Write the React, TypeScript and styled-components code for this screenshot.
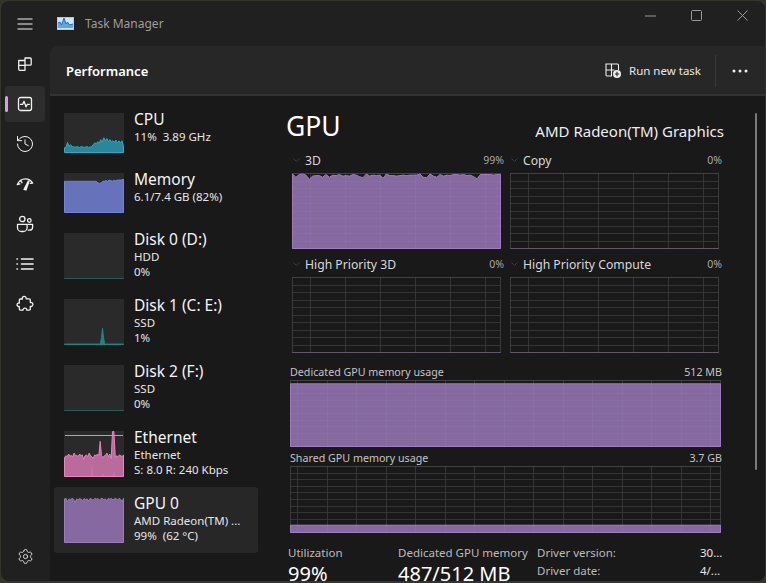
import React from "react";
import styled, { createGlobalStyle } from "styled-components";
import { History, Settings } from "lucide-react";

const GlobalStyle = createGlobalStyle`
html, body {
    margin: 0;
    padding: 0;
    background: #33352c;
}
* {
    box-sizing: border-box;
}
`;

const Screen = styled.div`
width: 766px;
height: 583px;
padding: 1px 1px 2px 1px;
overflow: hidden;
`;

const Window = styled.div`
width: 100%;
height: 100%;
display: flex;
background: #202020;
border-radius: 8px;
overflow: hidden;
font-family: "Noto Sans", "Open Sans", sans-serif;
color: #fff;
`;

const Rail = styled.nav`
width: 49px;
flex-shrink: 0;
display: flex;
flex-direction: column;
align-items: flex-start;
padding: 5px 0 3px 4px;
`;

const RailButton = styled.div<{ $active?: boolean }>`
position: relative;
width: 40px;
height: 36px;
margin-bottom: 4px;
display: flex;
align-items: center;
justify-content: center;
border-radius: 4px;
color: #f2f2f2;
background: ${(p) => (p.$active ? "#2d2d2d" : "transparent")};
`;

const RailAccent = styled.span`
position: absolute;
left: 0;
top: 10px;
width: 3px;
height: 16px;
border-radius: 2px;
background: #d79fe0;
`;

const RailSpacer = styled.div`
flex: 1;
`;

const Right = styled.div`
flex: 1;
min-width: 0;
display: flex;
flex-direction: column;
`;

const TitleBar = styled.header`
height: 45px;
flex-shrink: 0;
display: flex;
align-items: center;
padding-left: 7px;
`;

const AppName = styled.span`
margin-left: 11px;
font-size: 12px;
color: #9d9d9d;
`;

const WindowControls = styled.div`
margin-left: auto;
display: flex;
`;

const ControlButton = styled.div`
width: 46px;
height: 30px;
margin-top: -16px;
display: flex;
align-items: center;
justify-content: center;
color: #9a9a9a;
`;

const Panel = styled.div`
flex: 1;
min-height: 0;
display: flex;
flex-direction: column;
background: #191919;
border-top-left-radius: 8px;
overflow: hidden;
`;

const PanelHeader = styled.div`
height: 50px;
flex-shrink: 0;
display: flex;
align-items: center;
padding: 1px 17px 0 16px;
background: #272727;
border-bottom: 2px solid #333;
`;

const PanelTitle = styled.h1`
margin: 0;
font-size: 13px;
font-weight: 600;
`;

const RunTask = styled.div`
margin-left: auto;
display: flex;
align-items: center;
gap: 7px;
font-size: 11.5px;
color: #e8e8e8;
`;

const Divider = styled.div`
width: 1px;
height: 32px;
margin: 0 16px 0 14px;
background: #3a3a3a;
`;

const Body = styled.div`
flex: 1;
min-height: 0;
display: flex;
position: relative;
`;

const List = styled.div`
width: 220px;
flex-shrink: 0;
padding: 7px 0 0 4px;
`;

const ListItem = styled.div<{ $selected?: boolean; $tall?: boolean }>`
width: 204px;
height: ${(p) => (p.$tall ? 66 : 60)}px;
padding: 10px;
display: flex;
gap: 10px;
border-radius: 3px;
background: ${(p) => (p.$selected ? "#272727" : "transparent")};
`;

const Thumb = styled.div<{ $tall?: boolean }>`
width: 60px;
height: ${(p) => (p.$tall ? 46 : 40)}px;
flex-shrink: 0;
background: #2a2a2a;
`;

const ItemText = styled.div`
margin-top: -4px;
min-width: 0;
white-space: nowrap;
`;

const ItemName = styled.div`
font-size: 15.5px;
line-height: 20px;
color: #f4f4f4;
`;

const ItemSub = styled.div`
font-size: 11.5px;
line-height: 15px;
color: #e6e6e6;
white-space: pre;
`;

const Detail = styled.div`
flex: 1;
min-width: 0;
padding: 9px 0 0 20px;
overflow: hidden;
`;

const TitleRow = styled.div`
width: 434px;
height: 44px;
display: flex;
align-items: center;
justify-content: space-between;
`;

const GpuTitle = styled.h2`
margin: -2px 0 0 -4px;
font-size: 26.5px;
font-weight: 400;
`;

const GpuName = styled.div`
font-size: 15px;
margin-top: 8px;
color: #eee;
`;

const GraphGrid = styled.div`
width: 430px;
margin-left: 2px;
display: grid;
grid-template-columns: 212px 212px;
column-gap: 6px;
row-gap: 4px;
`;

const GraphCell = styled.div``;

const GraphHead = styled.div`
height: 24px;
padding-bottom: 2px;
display: flex;
align-items: center;
`;

const Chevron = styled.svg`
width: 7px;
height: 4px;
margin: 0 5px 0 1px;
color: #3c3c3c;
`;

const GraphLabel = styled.span`
font-size: 12.2px;
color: #d8d8d8;
`;

const GraphValue = styled.span`
margin-left: auto;
font-size: 10.5px;
color: #a8a8a8;
`;

const WideBlock = styled.div<{ $top: number }>`
width: 432px;
margin-top: ${(p) => p.$top}px;
`;

const WideHead = styled.div`
height: 17px;
display: flex;
justify-content: space-between;
align-items: center;
font-size: 10.7px;
color: #c4c4c4;
`;

const Stats = styled.div`
width: 434px;
margin: 12px 0 0 -2px;
display: flex;
`;

const Stat = styled.div<{ $w: number }>`
width: ${(p) => p.$w}px;
flex-shrink: 0;
`;

const StatLabel = styled.div`
font-size: 11.5px;
line-height: 16px;
color: #bcbcbc;
white-space: nowrap;
`;

const StatValue = styled.div`
font-size: 20px;
line-height: 26px;
white-space: nowrap;
`;

const DriverRows = styled.div`
flex: 1;
display: flex;
flex-direction: column;
gap: 2px;
`;

const DriverRow = styled.div`
display: flex;
justify-content: space-between;
font-size: 11.5px;
line-height: 16px;
color: #bcbcbc;
`;

const DriverValue = styled.span`
color: #e6e6e6;
width: 22px;
`;

const ScrollThumb = styled.div`
position: absolute;
right: 8px;
top: 17px;
width: 2px;
height: 357px;
border-radius: 1px;
background: #7a7a7a;
`;

type GraphProps = {
    w: number;
    h: number;
    values: number[];
    color: string;
    fill: string;
    rows?: number;
    offX?: number;
    stepX?: number;
    extra?: number[];
    cap?: number;
};

const Graph = ({ w, h, values, color, fill, rows = 0, offX = 0, stepX = 0, extra, cap }: GraphProps) => {
    const toPath = (vals: number[]) => {
        const pts = vals.map((v, i) => `${(0.5 + (i / (vals.length - 1)) * (w - 1)).toFixed(1)},${(h - 0.5 - v * (h - 1)).toFixed(1)}`);
        return `M0.5,${h - 0.5}L${pts.join("L")}L${w - 0.5},${h - 0.5}Z`;
    };
    const vertical: number[] = [];
    if (stepX) {
        for (let x = offX; x < w; x += stepX) vertical.push(x);
    }
    const horizontal: number[] = [];
    for (let i = 0; i <= rows; i++) horizontal.push(Math.round((i * (h - 1)) / rows) + 0.5);
    const gridLines = (color: string) => (
        <>
            {horizontal.map((y) => <line key={`h${y}`} x1={0} x2={w} y1={y} y2={y} stroke={color} />)}
            {vertical.map((x) => <line key={`v${x}`} x1={Math.round(x) + 0.5} x2={Math.round(x) + 0.5} y1={0} y2={h} stroke={color} />)}
        </>
    );
    return (
        <svg width={w} height={h} viewBox={`0 0 ${w} ${h}`} style={{ display: "block" }}>
            {rows > 0 && gridLines("#2c2c2c")}
            {rows > 0 && <rect x={0.5} y={0.5} width={w - 1} height={h - 1} fill="none" stroke="#3a3a3a" />}
            <path d={toPath(values)} fill={fill} stroke={color} strokeWidth={1} />
            {rows > 0 && gridLines("rgba(255,255,255,0.04)")}
            {extra && <path d={toPath(extra)} fill={color} fillOpacity={0.35} stroke="none" />}
            {cap !== undefined && <line x1={1} x2={w - 1} y1={cap} y2={cap} stroke={color} />}
        </svg>
    );
};

const PURPLE = "#9a7cbd";
const PURPLE_FILL = "rgb(133,105,160)";
const FLAT = [0, 0];

const cpuData = [0.12, 0.13, 0.26, 0.16, 0.2, 0.14, 0.15, 0.13, 0.15, 0.14, 0.13, 0.15, 0.14, 0.13, 0.14, 0.15, 0.13, 0.14, 0.15, 0.2, 0.25, 0.22, 0.28, 0.24, 0.33, 0.26, 0.38, 0.3, 0.36, 0.28, 0.33, 0.27, 0.3, 0.26, 0.32, 0.24, 0.3, 0.25, 0.3, 0.15];
const memData = [0.8, 0.8, 0.8, 0.8, 0.8, 0.8, 0.8, 0.8, 0.8, 0.8, 0.8, 0.8, 0.8, 0.8, 0.8, 0.8, 0.8, 0.8, 0.8, 0.8, 0.8, 0.76, 0.75, 0.76, 0.8, 0.8, 0.82, 0.8, 0.83, 0.82, 0.8, 0.83, 0.81, 0.83, 0.83, 0.83, 0.84, 0.85];
const disk1Data = Array.from({ length: 60 }, (_, i) => (i === 38 ? 0.36 : i === 37 || i === 39 ? 0.16 : i === 36 || i === 40 ? 0.03 : 0.01));
const ethData = [0.42, 0.46, 0.44, 0.5, 0.45, 0.47, 0.44, 0.52, 0.46, 0.47, 0.44, 0.5, 0.46, 0.48, 0.38, 0.46, 0.48, 0.44, 0.52, 0.46, 0.44, 0.4, 0.48, 0.46, 0.5, 0.46, 0.78, 0.46, 0.42, 0.46, 0.48, 0.52, 0.44, 0.5, 0.4, 1, 1, 0.42, 0.46, 0.44, 0.48, 0.46, 0.44, 0.48];
const ethLow = [0, 0, 0, 0, 0, 0, 0, 0, 0, 0, 0, 0, 0, 0, 0, 0, 0, 0, 0, 0.02, 0.3, 0.02, 0, 0, 0, 0, 0, 0.02, 0.08, 0.02, 0, 0, 0, 0, 0, 0.02, 0.1, 0.02, 0, 0, 0, 0, 0, 0];
const gpuThumb = [0.97, 0.98, 0.9, 0.97, 0.95, 0.98, 0.96, 0.88, 0.97, 0.94, 0.98, 0.96, 0.93, 0.98, 0.95, 0.97, 0.92, 0.98, 0.96, 0.94, 0.98, 0.96, 0.98, 0.94, 0.97, 0.98, 0.95, 0.97, 0.93, 0.98, 0.96, 0.98, 0.95, 0.97, 0.98, 0.94, 0.98, 0.96, 0.9, 0.98];
const gpu3d = [0.99, 0.93, 0.98, 0.99, 0.97, 0.89, 0.95, 0.96, 0.96, 0.93, 0.98, 0.93, 0.97, 0.96, 0.98, 0.95, 0.96, 0.95, 0.98, 0.97, 0.94, 0.92, 0.99, 0.95, 0.97, 0.96, 0.97, 0.91, 0.99, 0.96, 0.96, 0.95, 0.96, 0.97, 0.96, 0.97, 0.97, 0.97, 0.99, 0.93, 0.92, 0.99, 0.95, 0.93, 0.98, 0.95, 0.97, 0.96, 0.98, 0.98, 0.97, 0.98, 0.96, 0.97, 0.94, 0.9, 0.98, 0.98, 0.98, 0.98, 0.97, 0.98, 0.98].map((v) => 1 - (1 - v) * 0.7);

const GRID_COLOR = "#5b5068";
const GRID_CLEAR = "rgba(0,0,0,0)";

const stroke = {
    fill: "none",
    stroke: "currentColor",
    strokeWidth: 1.3,
    strokeLinecap: "round" as const,
    strokeLinejoin: "round" as const,
};

const ProcessesIcon = () => (
    <svg width="16" height="16" viewBox="0 0 16 16" {...stroke}>
        <path d="M1.7 4.5h6.3v9.8H3a1.3 1.3 0 0 1-1.3-1.3V4.5zM1.7 9.4h6.3M8 2h5.2a1 1 0 0 1 1 1v5.2a1 1 0 0 1-1 1H8V2z" />
    </svg>
);

const PerformanceIcon = () => (
    <svg width="16" height="16" viewBox="0 0 16 16" {...stroke}>
        <rect x="1.5" y="1.5" width="13" height="13" rx="2" />
        <path d="M3.5 8.3h2.2l1.3-3 2 5.6 1.3-2.6h2.2" />
    </svg>
);

const StartupIcon = () => (
    <svg width="18" height="14" viewBox="0 0 18 14" {...stroke}>
        <path d="M1.3 7.5C3 3.6 6.200 1.800 9.500 1.800c2.800 0 5.300 1.300 7.200 4.200M1.300 7.500l2.700-.6M4.800 3.600l1.200 2.200M16.700 6l-2.400.3" />
        <path d="M7.200 12.800l4.800-9.600 1.800.9-3.400 9.700z" fill="currentColor" stroke="none" />
    </svg>
);

const UsersIcon = () => (
    <svg width="18" height="18" viewBox="0 0 18 18" {...stroke}>
        <circle cx="6.3" cy="4" r="2.7" />
        <circle cx="13.3" cy="5.5" r="1.8" />
        <path d="M1.5 9.3h9.6v3.4a3.9 3.9 0 0 1-3.900 3.800H5.400a3.900 3.900 0 0 1-3.900-3.800V9.300z" />
        <path d="M12 9.300h4.600v2.900c0 1.900-1.600 3-3.200 3h-1.100" />
    </svg>
);

const DetailsIcon = () => (
    <svg width="18" height="14" viewBox="0 0 18 14" {...stroke}>
        <path d="M5.500 2h11.500M5.500 7h11.500M5.500 12h11.500M1 2h.4M1 7h.4M1 12h.4" strokeWidth="1.6" />
    </svg>
);

const ServicesIcon = () => (
    <svg width="18" height="18" viewBox="0 0 18 18" {...stroke}>
        <path d="M7.200 1.600c1.600-.8 3.200.4 3 2.200h3.100a1 1 0 0 1 1 1v2.700c1.900-.4 3 1.200 2.400 2.800-.5 1.100-1.500 1.400-2.400 1.100v2.700a1 1 0 0 1-1 1h-2.600c.2-2-2.900-2.800-3.600-.7-.2.3-.2.500-.1.700H4.300a1 1 0 0 1-1-1v-2.600C1 12 .2 8.900 2.300 8.200c.3-.1.700-.1 1 0V5a1 1 0 0 1 1-1h2.100c-.3-1 0-1.900.8-2.400z" />
    </svg>
);

const MenuIcon = () => (
    <svg width="16" height="12" viewBox="0 0 16 12" fill="none" stroke="currentColor" strokeWidth="1.1">
        <path d="M0.500 1h15M0.500 6h15M0.500 11h15" />
    </svg>
);

const AppIcon = () => (
    <svg width="17" height="13" viewBox="0 0 17 13">
        <rect x="0.5" y="0.5" width="16" height="12" fill="#cfe6f8" stroke="#a8cdea" />
        <path d="M1 11V6l2-1 1.500 3 2.500-7 2 6 1.500-2 2 3 3.500-1v4z" fill="#5aa8ea" />
        <path d="M1 6l2-1 1.500 3 2.500-7 2 6 1.500-2 2 3 3.500-1" fill="none" stroke="#2a6cb4" strokeWidth="1" />
    </svg>
);

const RunIcon = () => (
    <svg width="17" height="16" viewBox="0 0 17 16">
        <path d="M1 1h5.500v12H2a1 1 0 0 1-1-1V1zM1 7h5.500M6.500 1h6a1 1 0 0 1 1 1v5M6.500 7h3" fill="none" stroke="#eee" strokeWidth="1.1" />
        <circle cx="12" cy="11" r="4" fill="#eee" />
        <path d="M12 8.800v4.400M9.800 11h4.400" stroke="#222" strokeWidth="1.1" />
    </svg>
);

const DotsIcon = () => (
    <svg width="16" height="4" viewBox="0 0 16 4" fill="#eee">
        <circle cx="2" cy="2" r="1.500" />
        <circle cx="8" cy="2" r="1.500" />
        <circle cx="14" cy="2" r="1.500" />
    </svg>
);

const ChevronDown = () => (
    <Chevron viewBox="0 0 7 4" fill="none" stroke="currentColor">
        <path d="M0.500 0.500l3 3 3-3" />
    </Chevron>
);

const items = [
    { name: "CPU", sub: ["11%  3.89 GHz"], graph: <Graph w={60} h={40} values={cpuData} color="#2aaac4" fill="rgba(42,150,172,0.85)" /> },
    { name: "Memory", sub: ["6.1/7.4 GB (82%)"], graph: <Graph w={60} h={40} values={memData} color="#7083e0" fill="#6673bb" /> },
    { name: "Disk 0 (D:)", sub: ["HDD", "0%"], tall: true, graph: <Graph w={60} h={46} values={FLAT} color="#2b5c58" fill="#2b5c58" /> },
    { name: "Disk 1 (C: E:)", sub: ["SSD", "1%"], tall: true, graph: <Graph w={60} h={46} values={disk1Data} color="#1f8583" fill="#1f8583" /> },
    { name: "Disk 2 (F:)", sub: ["SSD", "0%"], tall: true, graph: <Graph w={60} h={46} values={FLAT} color="#2b5c58" fill="#2b5c58" /> },
    { name: "Ethernet", sub: ["Ethernet", "S: 8.0 R: 240 Kbps"], tall: true, graph: <Graph w={60} h={46} values={ethData} extra={ethLow} color="#ea82c0" fill="#b96b9c" cap={4.5} /> },
    { name: "GPU 0", sub: ["AMD Radeon(TM) ...", "99%  (62 °C)"], tall: true, selected: true, graph: <Graph w={60} h={46} values={gpuThumb} color={PURPLE} fill="#8569a0" /> },
];

const App = () => {
    return (
        <Screen>
            <GlobalStyle />
            <Window>
                <Rail>
                    <RailButton><MenuIcon /></RailButton>
                    <RailButton><ProcessesIcon /></RailButton>
                    <RailButton $active><RailAccent /><PerformanceIcon /></RailButton>
                    <RailButton><History size={20} strokeWidth={1.2} /></RailButton>
                    <RailButton><StartupIcon /></RailButton>
                    <RailButton><UsersIcon /></RailButton>
                    <RailButton><DetailsIcon /></RailButton>
                    <RailButton><ServicesIcon /></RailButton>
                    <RailSpacer />
                    <RailButton><Settings size={17} strokeWidth={1.2} /></RailButton>
                </Rail>
                <Right>
                    <TitleBar>
                        <AppIcon />
                        <AppName>Task Manager</AppName>
                        <WindowControls>
                            <ControlButton>
                                <svg width="11" height="2" viewBox="0 0 11 2" stroke="currentColor"><path d="M0 1h11" /></svg>
                            </ControlButton>
                            <ControlButton>
                                <svg width="11" height="11" viewBox="0 0 11 11" fill="none" stroke="currentColor"><rect x="0.500" y="0.500" width="10" height="10" rx="1" /></svg>
                            </ControlButton>
                            <ControlButton>
                                <svg width="11" height="11" viewBox="0 0 11 11" stroke="currentColor"><path d="M0.500 0.500l10 10M10.500 0.500l-10 10" /></svg>
                            </ControlButton>
                        </WindowControls>
                    </TitleBar>
                    <Panel>
                        <PanelHeader>
                            <PanelTitle>Performance</PanelTitle>
                            <RunTask><RunIcon />Run new task</RunTask>
                            <Divider />
                            <DotsIcon />
                        </PanelHeader>
                        <Body>
                            <List>
                                {items.map((it) => (
                                    <ListItem key={it.name} $tall={it.tall} $selected={it.selected}>
                                        <Thumb $tall={it.tall}>{it.graph}</Thumb>
                                        <ItemText>
                                            <ItemName>{it.name}</ItemName>
                                            {it.sub.map((s) => <ItemSub key={s}>{s}</ItemSub>)}
                                        </ItemText>
                                    </ListItem>
                                ))}
                            </List>
                            <Detail>
                                <TitleRow>
                                    <GpuTitle>GPU</GpuTitle>
                                    <GpuName>AMD Radeon(TM) Graphics</GpuName>
                                </TitleRow>
                                <GraphGrid>
                                    <GraphCell>
                                        <GraphHead><ChevronDown /><GraphLabel>3D</GraphLabel><GraphValue>99%</GraphValue></GraphHead>
                                        <Graph w={209} h={76} rows={10} offX={18} stepX={35} values={gpu3d} color={PURPLE} fill={PURPLE_FILL} />
                                    </GraphCell>
                                    <GraphCell>
                                        <GraphHead><ChevronDown /><GraphLabel>Copy</GraphLabel><GraphValue>0%</GraphValue></GraphHead>
                                        <Graph w={209} h={76} rows={10} offX={18} stepX={35} values={FLAT} color={GRID_COLOR} fill={GRID_CLEAR} />
                                    </GraphCell>
                                    <GraphCell>
                                        <GraphHead><ChevronDown /><GraphLabel>High Priority 3D</GraphLabel><GraphValue>0%</GraphValue></GraphHead>
                                        <Graph w={209} h={76} rows={10} offX={18} stepX={35} values={FLAT} color={GRID_COLOR} fill={GRID_CLEAR} />
                                    </GraphCell>
                                    <GraphCell>
                                        <GraphHead><ChevronDown /><GraphLabel>High Priority Compute</GraphLabel><GraphValue>0%</GraphValue></GraphHead>
                                        <Graph w={209} h={76} rows={10} offX={18} stepX={35} values={FLAT} color={GRID_COLOR} fill={GRID_CLEAR} />
                                    </GraphCell>
                                </GraphGrid>
                                <WideBlock $top={10}>
                                    <WideHead><span>Dedicated GPU memory usage</span><span>512 MB</span></WideHead>
                                    <Graph w={431} h={67} rows={10} offX={7} stepX={29.5} values={[0.95, 0.95]} color={PURPLE} fill={PURPLE_FILL} />
                                </WideBlock>
                                <WideBlock $top={2}>
                                    <WideHead><span>Shared GPU memory usage</span><span>3.7 GB</span></WideHead>
                                    <Graph w={431} h={67} rows={10} offX={7} stepX={29.5} values={[0.11, 0.11]} color={PURPLE} fill={PURPLE_FILL} />
                                </WideBlock>
                                <Stats>
                                    <Stat $w={110}>
                                        <StatLabel>Utilization</StatLabel>
                                        <StatValue>99%</StatValue>
                                    </Stat>
                                    <Stat $w={139}>
                                        <StatLabel>Dedicated GPU memory</StatLabel>
                                        <StatValue>487/512 MB</StatValue>
                                    </Stat>
                                    <DriverRows>
                                        <DriverRow><span>Driver version:</span><DriverValue>30...</DriverValue></DriverRow>
                                        <DriverRow><span>Driver date:</span><DriverValue>4/...</DriverValue></DriverRow>
                                    </DriverRows>
                                </Stats>
                            </Detail>
                            <ScrollThumb />
                        </Body>
                    </Panel>
                </Right>
            </Window>
        </Screen>
    );
};

export default App;
